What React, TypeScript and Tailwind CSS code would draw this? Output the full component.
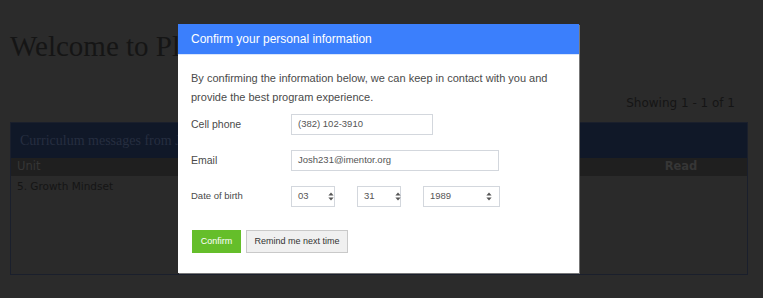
import React from 'react'

function UpDown() {
  return (
    <svg width="6" height="9" viewBox="0 0 6 9" className="shrink-0">
      <path d="M3 0.5 L5.6 3.6 H0.4 Z" fill="#555" />
      <path d="M3 8.5 L5.6 5.4 H0.4 Z" fill="#555" />
    </svg>
  )
}

function SelectBox({ value, width, arrowAt }: { value: string; width: string; arrowAt: string }) {
  return (
    <div className={`flex h-[21px] ${width} items-center border border-[#d3d7dd] bg-white pl-[6px]`}>
      <span className="text-[9.5px] text-[#555]">{value}</span>
      <span className={arrowAt}>
        <UpDown />
      </span>
    </div>
  )
}

export default function App() {
  return (
    <div className="relative h-[298px] w-[763px] overflow-hidden bg-[#2b2b2b]">
      {/* Dimmed page behind the dialog */}
      <div className="pl-[10px] pr-[15px] pt-[28px] text-[#151515]">
        <h1 className="font-['Liberation_Serif',serif] text-[29px] leading-[36px]">Welcome to Platform</h1>
        <div className="mt-[31px] flex justify-end pr-[13px] font-['DejaVu_Sans',sans-serif] text-[12px] leading-[16px]">
          Showing 1 - 1 of 1
        </div>
        <div className="mt-[11px] h-[153px] border border-[#1a1f2c] bg-[#2a2a2a]">
          <div className="flex h-[35px] items-center bg-[#101828] px-[9px] font-['Liberation_Serif',serif] text-[14px] text-[#262e40]">
            Curriculum messages from Joshua
          </div>
          <div className="flex h-[18px] items-center bg-[#1f1f1f] font-['DejaVu_Sans',sans-serif] text-[11.5px] text-[#363636]">
            <span className="flex-1 pl-[6px]">Unit</span>
            <span className="w-[132px] text-center font-semibold">Read</span>
          </div>
          <div className="pl-[6px] pt-[2px] font-['DejaVu_Sans',sans-serif] text-[10.5px] leading-[16px]">
            5. Growth Mindset
          </div>
        </div>
      </div>

      {/* Dialog */}
      <div className="absolute left-[178px] top-[24px] w-[401px] bg-white font-['Liberation_Sans',Arial,sans-serif] shadow-[1px_1px_0_#777]">
        <div className="flex h-[31px] items-center border-b border-[#d9e5fb] bg-[#3b7ffc] pl-[13px] text-[12px] text-white">
          Confirm your personal information
        </div>
        <div className="px-[13px] pb-[20px] pt-[14px]">
          <p className="text-[11px] leading-[19px] text-[#4a4a4a]">
            By confirming the information below, we can keep in contact with you and provide the best program experience.
          </p>

          <div className="mt-[7px] flex flex-col gap-[15px]">
            <div className="flex h-[21px] items-center">
              <label className="w-[100px] text-[10.5px] text-[#4a4a4a]">Cell phone</label>
              <div className="flex h-[21px] w-[142px] items-center border border-[#d3d7dd] pl-[6px] text-[9.5px] text-[#555]">
                (382) 102-3910
              </div>
            </div>
            <div className="flex h-[21px] items-center">
              <label className="w-[100px] text-[10.5px] text-[#4a4a4a]">Email</label>
              <div className="flex h-[21px] w-[208px] items-center border border-[#d3d7dd] pl-[6px] text-[9.5px] text-[#555]">
                Josh231@imentor.org
              </div>
            </div>
            <div className="flex h-[21px] items-center">
              <label className="w-[100px] text-[9.5px] text-[#4a4a4a]">Date of birth</label>
              <div className="flex items-center gap-[22px]">
                <SelectBox value="03" width="w-[44px]" arrowAt="ml-[19px]" />
                <SelectBox value="31" width="w-[44px]" arrowAt="ml-[20px]" />
                <SelectBox value="1989" width="w-[77px]" arrowAt="ml-[35px]" />
              </div>
            </div>
          </div>

          <div className="mt-[23px] flex gap-[5px] pl-[1px]">
            <button className="h-[23px] w-[49px] bg-[#65be2a] text-[9px] text-white">Confirm</button>
            <button className="h-[23px] w-[102px] border border-[#c9c9c9] bg-[#f0f0f0] text-[9px] text-[#333]">
              Remind me next time
            </button>
          </div>
        </div>
      </div>
    </div>
  )
}
